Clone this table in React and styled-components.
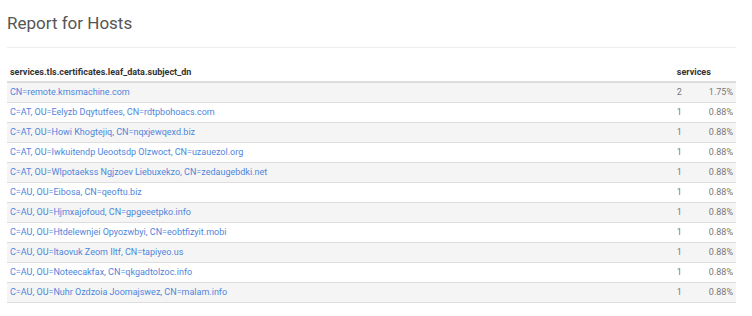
import styled, { createGlobalStyle } from 'styled-components'

const GlobalStyle = createGlobalStyle`
	body {
		margin: 0;
		background: #fff;
		font-family: Roboto, "Liberation Sans", sans-serif;
	}
`

const rows = [
	['CN=remote.kmsmachine.com', 2, '1.75%'],
	['C=AT, OU=Eelyzb Dqytutfees, CN=rdtpbohoacs.com', 1, '0.88%'],
	['C=AT, OU=Howi Khogtejiq, CN=nqxjewqexd.biz', 1, '0.88%'],
	['C=AT, OU=Iwkuitendp Ueootsdp Olzwoct, CN=uzauezol.org', 1, '0.88%'],
	['C=AT, OU=Wlpotaekss Ngjzoev Liebuxekzo, CN=zedaugebdki.net', 1, '0.88%'],
	['C=AU, OU=Eibosa, CN=qeoftu.biz', 1, '0.88%'],
	['C=AU, OU=Hjmxajofoud, CN=gpgeeetpko.info', 1, '0.88%'],
	['C=AU, OU=Htdelewnjei Opyozwbyi, CN=eobtfizyit.mobi', 1, '0.88%'],
	['C=AU, OU=Itaovuk Zeom Iltf, CN=tapiyeo.us', 1, '0.88%'],
	['C=AU, OU=Noteecakfax, CN=qkgadtolzoc.info', 1, '0.88%'],
	['C=AU, OU=Nuhr Ozdzoia Joomajswez, CN=malam.info', 1, '0.88%'],
]

const App = () => {
	return (
		<Page>
			<GlobalStyle />
			<Title>Report for Hosts</Title>

			<Table>
				<thead>
					<tr>
						<HeadCell>services.tls.certificates.leaf_data.subject_dn</HeadCell>
						<HeadCell colSpan={2}>services</HeadCell>
					</tr>
				</thead>
				<tbody>
					{rows.map(([name, count, pct], i) => (
						<Row key={name} striped={i % 2 === 0}>
							<Cell><Link href="#">{name}</Link></Cell>
							<CountCell>{count}</CountCell>
							<PctCell>{pct}</PctCell>
						</Row>
					))}
				</tbody>
			</Table>
		</Page>
	)
}

export default App

const Page = styled.div`
	width: 729px;
	padding: 0 16px 0 7px;
`

const Title = styled.h1`
	margin: 0;
	padding: 11px 0 11px;
	font-size: 17px;
	line-height: 25px;
	font-weight: 400;
	color: #555;
	border-bottom: 1px solid #eee;
`

const Table = styled.table`
	width: 100%;
	margin-top: 15px;
	border-collapse: collapse;
	font-size: 9px;
`

const HeadCell = styled.th`
	height: 18px;
	padding: 0 3px;
	text-align: left;
	vertical-align: middle;
	font-weight: 700;
	font-size: 9px;
	color: #333;
	border-bottom: 2px solid #ddd;
`

const Row = styled.tr`
	height: 20px;
	background: ${p => p.striped ? '#f5f5f5' : '#fff'};
	border-bottom: 1px solid #ddd;
`

const Cell = styled.td`
	padding: 0 3px;
	vertical-align: middle;
`

const CountCell = styled.td`
	width: 26px;
	padding: 0 3px;
	color: #777;
`

const PctCell = styled.td`
	width: 24px;
	padding: 0 3px;
	text-align: right;
	color: #777;
`

const Link = styled.a`
	color: #4f85dc;
	text-decoration: none;
`
